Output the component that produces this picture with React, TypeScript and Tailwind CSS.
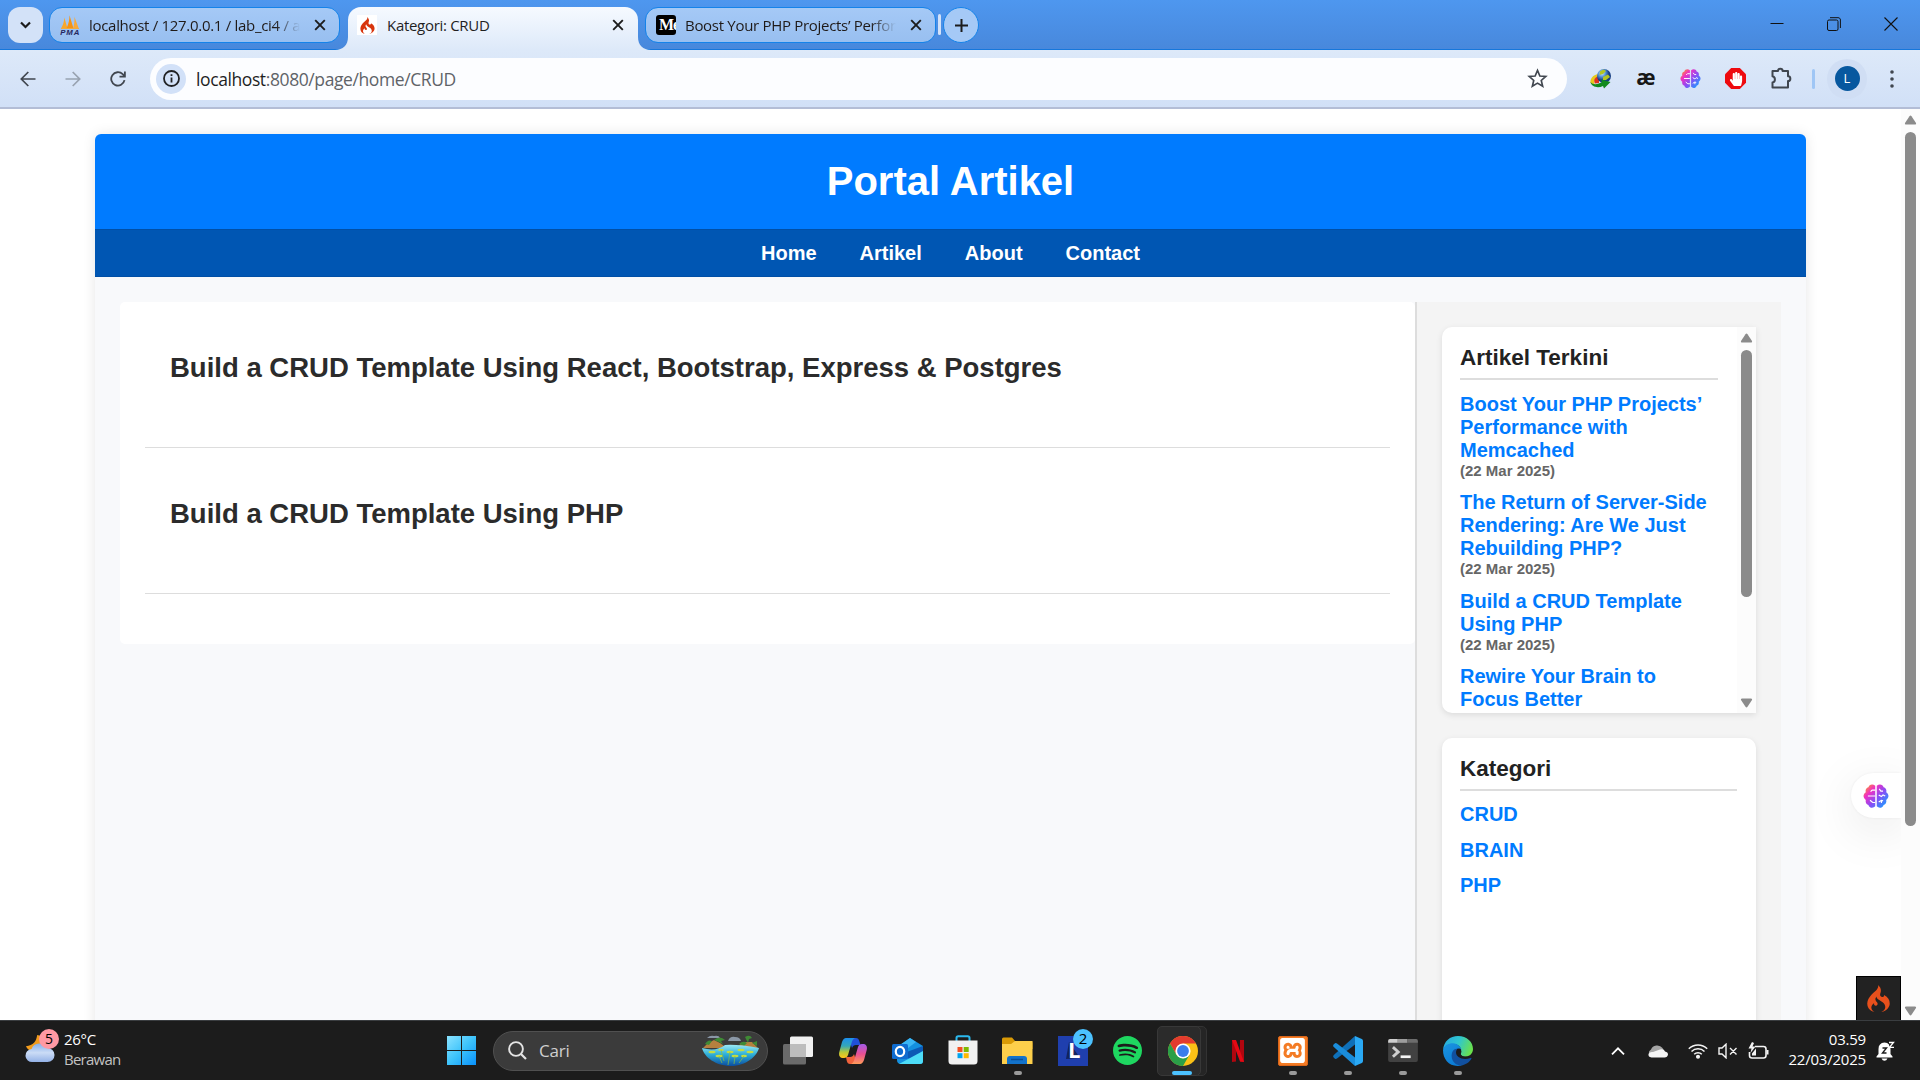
import React from "react";
import { SiCodeigniter, SiSpotify, SiXampp } from "react-icons/si";
import { FaHandPaper } from "react-icons/fa";

const articles = [
  "Build a CRUD Template Using React, Bootstrap, Express & Postgres",
  "Build a CRUD Template Using PHP",
];
const latest = [
  "Boost Your PHP Projects’ Performance with Memcached",
  "The Return of Server-Side Rendering: Are We Just Rebuilding PHP?",
  "Build a CRUD Template Using PHP",
  "Rewire Your Brain to Focus Better",
];
const categories = ["CRUD", "BRAIN", "PHP"];

function CloseX() {
  return (
    <svg width="12" height="12" viewBox="0 0 12 12" className="shrink-0">
      <path d="M1.200 1.200 10.800 10.800M10.800 1.200 1.200 10.800" stroke="#1c1c1c" strokeWidth="1.900" fill="none" />
    </svg>
  );
}

function PmaLogo() {
  return (
    <svg width="20" height="20" viewBox="0 0 20 20" className="shrink-0">
      <path d="M1 13.500C3 10 4 7 4.300 2.500L7.500 13.500Z" fill="#f9a72b" />
      <path d="M6.500 13.500C9 8 9.500 4 9.500 0.300L13.500 13.500Z" fill="#f59314" />
      <path d="M13 13.500C14.500 9 14.500 6 14.400 1.800L18.800 13.500Z" fill="#f8a93a" />
      <path d="M1 13.500H19" stroke="#f9a72b" strokeWidth="0.800" />
      <text x="0.300" y="19.800" fontFamily="Liberation Sans, sans-serif" fontSize="7.800" fontWeight="700" fontStyle="italic" fill="#25265e" textLength="19">PMA</text>
    </svg>
  );
}

function Brain({ size, id }: { size: number; id: string }) {
  return (
    <svg width={size} height={size} viewBox="0 0 24 24">
      <defs>
        <linearGradient id={id} x1="0.050" y1="0.050" x2="0.950" y2="0.850">
          <stop offset="0" stopColor="#ffa01e" />
          <stop offset="0.280" stopColor="#f02fc2" />
          <stop offset="0.600" stopColor="#8a4df5" />
          <stop offset="1" stopColor="#1e9bff" />
        </linearGradient>
      </defs>
      <path
        d="M11.300 2.500C9 .5 5.500 1.200 5 4 2.600 4.600 2 6.800 2.600 8.500-.2 10.400-.2 13.800 2.600 15.600 2 18 3.200 19.700 5 20.200 5.700 23 9.300 23.700 11.300 21.500ZM12.700 2.500C15 .5 18.500 1.200 19 4 21.400 4.600 22 6.800 21.400 8.500 24.200 10.400 24.200 13.800 21.400 15.600 22 18 20.800 19.700 19 20.200 18.300 23 14.700 23.700 12.700 21.500Z"
        fill={`url(#${id})`}
      />
      <path d="M11.300 6.500H8.500L7 8M11.300 12H4.500M11.300 18H9L6.500 16M15 5.500 16.500 7.500H18.500M14.500 11 17 12.500 18.500 11 20.500 12M14.500 17.500 17 16 18.500 16.500M17 16V18.500" stroke="#fff" strokeWidth="1.100" fill="none" />
    </svg>
  );
}

function BackgroundTab({ icon, title }: { icon: React.ReactNode; title: string }) {
  return (
    <div className="flex h-[36px] w-[291px] items-center rounded-[13px] border border-[#1483ea] bg-gradient-to-b from-[#a5c9f6] to-[#98bff0] pl-[10px] pr-[13px]">
      {icon}
      <div className="ml-[9px] h-[22px] w-[211px] overflow-hidden whitespace-nowrap bg-gradient-to-r from-[#1f1a18] from-88% to-transparent bg-clip-text text-[15px] leading-[22px] tracking-[-0.300px] text-transparent">
        {title}
      </div>
      <div className="flex-1" />
      <CloseX />
    </div>
  );
}

function TabStrip() {
  return (
    <div className="flex h-[50px] items-start border-b border-[#1677dc] bg-gradient-to-b from-[#4e97ef] to-[#4888dc] pl-[8px] pt-[7px]">
      <div className="flex h-[36px] w-[35px] items-center justify-center rounded-[12px] bg-[#d3e2f8]">
        <svg width="11" height="8" viewBox="0 0 11 8"><path d="M1 1.500 5.500 6 10 1.500" stroke="#1c1c1c" strokeWidth="2.200" fill="none" /></svg>
      </div>
      <div className="ml-[6px]">
        <BackgroundTab icon={<PmaLogo />} title="localhost / 127.0.0.1 / lab_ci4 / artikel" />
      </div>
      <div className="relative ml-[8px] h-[43px] w-[290px] rounded-t-[13px] bg-gradient-to-b from-[#f6faff] to-[#dde9f9]">
        <svg width="13" height="13" viewBox="0 0 13 13" className="absolute -left-[13px] bottom-0"><path d="M13 0V13H0C8 13 13 8 13 0" fill="#dfeaf9" /></svg>
        <svg width="13" height="13" viewBox="0 0 13 13" className="absolute -right-[13px] bottom-0"><path d="M0 0V13H13C5 13 0 8 0 0" fill="#dfeaf9" /></svg>
        <div className="flex h-[36px] items-center pl-[9px] pr-[14px]">
          <div className="flex h-5 w-5 items-center justify-center bg-white"><SiCodeigniter size={17} color="#d8340c" /></div>
          <div className="ml-[10px] text-[15px] leading-[22px] tracking-[-0.300px] text-[#1f1f1f]">Kategori: CRUD</div>
          <div className="flex-1" />
          <CloseX />
        </div>
      </div>
      <div className="ml-[7px]">
        <BackgroundTab
          icon={
            <svg width="20" height="20" viewBox="0 0 20 20" className="shrink-0">
              <rect width="20" height="20" rx="3" />
              <text x="3" y="15" fontFamily="Liberation Serif, serif" fontSize="16" fontWeight="700" letterSpacing="-1" fill="#fff">Me</text>
            </svg>
          }
          title="Boost Your PHP Projects’ Performance"
        />
      </div>
      <div className="ml-[2px] mt-[7px] h-[21px] w-[3px] rounded-full bg-[#d3e2f8]" />
      <div className="ml-[2px] flex h-[36px] w-[36px] items-center justify-center rounded-full border border-[#1483ea] bg-[#a5c9f6]">
        <svg width="13" height="13" viewBox="0 0 13 13"><path d="M6.500 0V13M0 6.500H13" stroke="#1c1c1c" strokeWidth="2" /></svg>
      </div>
      <div className="flex-1" />
      <div className="mt-[10px] flex items-center gap-[43px] pr-[22px]">
        <svg width="14" height="14" viewBox="0 0 14 14"><path d="M0.500 6.500H13.500" stroke="#111" /></svg>
        <svg width="14" height="14" viewBox="0 0 14 14" fill="none" stroke="#111"><rect x="0.500" y="3" width="10.500" height="10.500" rx="1.500" /><path d="M3 0.700H11C12.500 .7 13.400 1.500 13.400 3V11" /></svg>
        <svg width="14" height="14" viewBox="0 0 14 14"><path d="M0.500 0.500 13.500 13.500M13.500 0.500 0.500 13.500" stroke="#111" strokeWidth="1.100" /></svg>
      </div>
    </div>
  );
}

function Toolbar() {
  return (
    <div className="flex h-[59px] items-center border-b-2 border-[#b3bdd6] bg-gradient-to-b from-[#dde9f9] to-[#d1e0f7]">
      <div className="flex w-[150px] items-center gap-[29px] pl-[20px]">
        <svg width="16" height="16" viewBox="0 0 16 16" fill="none" stroke="#40464f" strokeWidth="1.700"><path d="M15.500 8H1.500M8.300 1 1.300 8 8.300 15" /></svg>
        <svg width="16" height="16" viewBox="0 0 16 16" fill="none" stroke="#98a2b0" strokeWidth="1.700"><path d="M.5 8H14.500M7.700 1 14.700 8 7.700 15" /></svg>
        <svg width="16" height="16" viewBox="0 0 16 16" fill="none" stroke="#40464f" strokeWidth="1.800"><path d="M14.500 9.200A6.700 6.700 0 1 1 12.700 3.200L14.800 5.300M14.900 0.500V5.700H9.500" /></svg>
      </div>
      <div className="flex h-[42px] w-[1417px] items-center rounded-full bg-[#fcfdff] pl-[6px] pr-[19px]">
        <div className="flex h-[30px] w-[30px] items-center justify-center rounded-full bg-[#d2e1f8]">
          <svg width="17" height="17" viewBox="0 0 17 17" fill="none" stroke="#202124" strokeWidth="1.800"><circle cx="8.500" cy="8.500" r="7.500" /><path d="M8.500 7.500V12.500M8.500 4.300V6.100" /></svg>
        </div>
        <div className="ml-[10px] whitespace-nowrap text-[17.500px] leading-[24px] tracking-[-0.400px] text-[#5f6368]"><span className="text-[#1f1f1f]">localhost</span>:8080/page/home/CRUD</div>
        <div className="flex-1" />
        <svg width="21" height="21" viewBox="0 0 24 24" fill="none" stroke="#40464f" strokeWidth="1.900"><path d="M12 2.800 14.700 9.100 21.500 9.700 16.300 14.200 17.900 20.900 12 17.300 6.100 20.900 7.700 14.200 2.500 9.700 9.300 9.100Z" /></svg>
      </div>
      <div className="ml-[11px] flex items-center">
        <div className="flex w-[45px] justify-center">
          <svg width="22" height="22" viewBox="0 0 22 22">
            <defs><radialGradient id="globe" cx="0.350" cy="0.300"><stop offset="0" stopColor="#d5ecff" /><stop offset="0.500" stopColor="#5a97d8" /><stop offset="1" stopColor="#163d82" /></radialGradient></defs>
            <path d="M8 6C3 7 0 10.500 .5 15L5 17C3 13 5 9 10 8Z" fill="#e8c81c" />
            <path d="M9 8C5 9 3 12 5 15.500L9 15Z" fill="#e0341e" />
            <circle cx="14" cy="8" r="7" fill="url(#globe)" />
            <path d="M10 3.500 13.500 1.500 16 3 13 6 9.500 7ZM13 9 18 6.500 20 9 16 12 13 12Z" fill="#b4c41f" />
            <path d="M.5 14C4 18 9 15.500 12 14L11 11.500 20.500 14 14 20.500 13 18C8 20.500 1.500 19 .5 14Z" fill="#128a1e" />
          </svg>
        </div>
        <div className="flex w-[45px] justify-center font-['Open_Sans',sans-serif] text-[21px] font-bold leading-[24px] tracking-[-1px] text-[#171717]"><span className="-mt-[3px]">æ</span></div>
        <div className="flex w-[45px] justify-center"><Brain size={21} id="brainToolbar" /></div>
        <div className="flex w-[45px] justify-center">
          <div className="relative flex h-[21px] w-[21px] items-center justify-center">
            <svg width="21" height="21" viewBox="0 0 21 21" className="absolute inset-0"><path d="M6.200 0H14.800L21 6.200V14.800L14.800 21H6.200L0 14.800V6.200Z" fill="#ee0a0f" /></svg>
            <FaHandPaper size={14} color="#fff" className="relative" />
          </div>
        </div>
        <div className="flex w-[45px] justify-center pl-[2px]">
          <svg width="23" height="23" viewBox="0 0 23 23" fill="none" stroke="#40464f" strokeWidth="2"><path d="M2.500 4H8A2.300 2.300 0 0 1 12.600 4H18V9.300A2.300 2.300 0 0 1 18 14V20.500H2.500V15.500A3.200 3.200 0 0 0 2.500 9.300Z" strokeLinejoin="round" /></svg>
        </div>
        <div className="ml-[9px] h-[20px] w-[3px] rounded bg-[#9fc6f5]" />
        <div className="ml-[12px] flex h-[40px] w-[40px] items-center justify-center rounded-full bg-[#d0def4]">
          <div className="flex h-[25px] w-[25px] items-center justify-center rounded-full bg-[#07589f] text-[13px] text-white">L</div>
        </div>
        <svg width="4" height="18" viewBox="0 0 4 18" className="ml-[23px]" fill="#40464f"><circle cx="2" cy="2" r="1.800" /><circle cx="2" cy="9" r="1.800" /><circle cx="2" cy="16" r="1.800" /></svg>
      </div>
    </div>
  );
}

function Arrow({ down }: { down?: boolean }) {
  return (
    <svg width="13" height="10" viewBox="0 0 13 10" className={down ? "rotate-180" : ""}>
      <path d="M5.500 1.200Q6.500 0 7.500 1.200L12 8Q12.600 9.500 11 9.500H2Q.4 9.500 1 8Z" fill="#8b8b8b" />
    </svg>
  );
}

function WidgetTitle({ children }: { children: React.ReactNode }) {
  return (
    <h3 className="mb-[12.500px] h-[35px] border-b-2 border-[#ddd] text-[22.500px] font-bold leading-[26px] text-[#222]">{children}</h3>
  );
}

function Page() {
  return (
    <div className="relative flex h-[911px] overflow-hidden bg-white font-['Liberation_Sans',Arial,sans-serif]">
      <div className="w-[1901px] pl-[95px] pt-[25px]">
        <div className="h-[1200px] w-[1711px] overflow-hidden rounded-[6px] bg-[#f8f9fb] shadow-[0_0_13px_rgba(0,0,0,0.1)]">
          <header className="flex h-[95px] items-start justify-center bg-[#007bff] pt-[24px]">
            <h1 className="text-[40px] font-bold leading-[46px] text-white">Portal Artikel</h1>
          </header>
          <nav className="flex h-[48px] items-center justify-center gap-[43px] border-y border-[#004fa6] bg-[#0056b3] text-[20px] font-bold leading-[23px] text-white">
            <a>Home</a>
            <a>Artikel</a>
            <a>About</a>
            <a>Contact</a>
          </nav>
          <div className="flex items-start px-[25px] pt-[25px]">
            <main className="h-[342px] w-[1295px] rounded-[5px] bg-white p-[25px]">
              {articles.map((title) => (
                <article key={title} className="mb-[25px] h-[121px] border-b border-[#ddd] p-[25px]">
                  <h2 className="text-[27.500px] font-bold leading-[32px] text-[#2b2b2b]">{title}</h2>
                </article>
              ))}
            </main>
            <aside className="h-[1100px] w-[366px] border-l-2 border-[#ddd] bg-[#f4f4f4] p-[25px]">
              <section className="mb-[25px] flex h-[386px] w-[314px] overflow-hidden rounded-l-[10px] bg-white shadow-[0_2px_6px_rgba(0,0,0,0.1)]">
                <div className="w-[295px] pl-[18px] pr-[19px] pt-[18px]">
                  <WidgetTitle>Artikel Terkini</WidgetTitle>
                  <ul>
                    {latest.map((title) => (
                      <li key={title} className="mb-[12.500px] text-[20px] font-bold leading-[23px] text-[#007bff]">
                        {title}
                        <small className="block text-[15px] leading-[17px] text-[#666]">(22 Mar 2025)</small>
                      </li>
                    ))}
                  </ul>
                </div>
                <div className="flex w-[19px] flex-col items-center bg-[#fcfcfc] pb-[5px] pt-[6px]">
                  <Arrow />
                  <div className="mt-[7px] h-[247px] w-[11px] rounded-full bg-[#8b8b8b]" />
                  <div className="flex-1" />
                  <Arrow down />
                </div>
              </section>
              <section className="h-[420px] w-[314px] rounded-[10px] bg-white pl-[18px] pr-[19px] pt-[18px] shadow-[0_2px_6px_rgba(0,0,0,0.1)]">
                <WidgetTitle>Kategori</WidgetTitle>
                <ul className="-mt-[0.500px]">
                  {categories.map((name) => (
                    <li key={name} className="mb-[12.500px] text-[20px] font-bold leading-[23px] text-[#007bff]">{name}</li>
                  ))}
                </ul>
              </section>
            </aside>
          </div>
        </div>
      </div>
      <div className="relative flex w-[19px] flex-col items-center bg-[#fcfcfc] pb-[4px] pt-[6px]">
        <Arrow />
        <div className="mt-[7px] h-[694px] w-[11px] rounded-full bg-[#8b8b8b]" />
        <div className="flex-1" />
        <Arrow down />
      </div>
      <div className="absolute bottom-0 right-[19px] top-0 w-[130px] overflow-hidden">
        <div className="absolute right-0 top-[664px] flex h-[45px] w-[50px] items-center rounded-l-full bg-white pl-[12px] shadow-[0_12px_50px_rgba(0,0,0,0.100),0_0_3px_rgba(0,0,0,0.060)]">
          <Brain size={26} id="brainFloating" />
        </div>
        <div className="absolute bottom-0 right-0 flex h-[44px] w-[45px] items-center justify-center border border-b-0 border-black bg-[#222]">
          <SiCodeigniter size={27} color="#e8501c" />
        </div>
      </div>
    </div>
  );
}

function Slot({ children, running }: { children: React.ReactNode; running?: boolean }) {
  return (
    <div className="relative flex h-[60px] w-[55px] items-center justify-center">
      {children}
      {running && <div className="absolute bottom-[6px] left-[23.500px] h-[4px] w-[8px] rounded-full bg-[#9a9a9a]" />}
    </div>
  );
}

function WindowsLogo() {
  return (
    <svg width="29" height="29" viewBox="0 0 29 29">
      <defs><linearGradient id="win" x1="0" y1="0" x2="29" y2="29" gradientUnits="userSpaceOnUse"><stop offset="0" stopColor="#8be3ff" /><stop offset="0.500" stopColor="#3dc3fb" /><stop offset="1" stopColor="#0890fa" /></linearGradient></defs>
      <path d="M0 0H14V14H0ZM15 0H29V14H15ZM0 15H14V29H0ZM15 15H29V29H15Z" fill="url(#win)" />
    </svg>
  );
}

function Lake() {
  return (
    <svg width="57" height="31" viewBox="0 0 57 31">
      <defs><linearGradient id="lake" x1="0" y1="0" x2="0" y2="1"><stop offset="0" stopColor="#9be8f4" /><stop offset="0.450" stopColor="#2fb0d8" /><stop offset="1" stopColor="#0a4da0" /></linearGradient></defs>
      <path d="M5 3Q8 0 12 1 17 0 18 3ZM26 6Q28 1 33 2 38 2 39 6Z" fill="#8a97a6" />
      <path d="M1 13 6 8 12 5 18 8 22 11 36 11 42 7 50 7 56 13Z" fill="#b5803f" />
      <path d="M3 9Q6 4 10 6L7 10ZM12 5Q18 0 23 5L19 6 21 9 17 7ZM37 9Q41 5 45 8L42 11ZM43 2Q48-1 50 3L47 4 46 8ZM50 8 55 6 55 11Z" fill="#3f8a35" />
      <path d="M0 13Q14 17 23 10 35 9 57 13C55 21 44 31 29 31 14 31 2 22 0 13Z" fill="url(#lake)" />
      <g fill="#c4dc45"><ellipse cx="10" cy="17" rx="3.500" ry="1.300" /><ellipse cx="19" cy="15" rx="3" ry="1.100" /><ellipse cx="28" cy="17" rx="3.500" ry="1.200" /><ellipse cx="39" cy="15" rx="3.500" ry="1.200" /><ellipse cx="48" cy="17" rx="3.500" ry="1.200" /><ellipse cx="17" cy="21" rx="3.500" ry="1.300" /><ellipse cx="33" cy="21" rx="3.500" ry="1.300" /><ellipse cx="42" cy="21" rx="3" ry="1.200" /></g>
      <path d="M17 21 20 28M28 17 26 30M33 21 32 29M42 21 37 28M19 15 22 26" stroke="#8fbf3c" strokeWidth="0.700" fill="none" />
    </svg>
  );
}

function TaskViewIcon() {
  return (
    <svg width="30" height="29" viewBox="0 0 30 29">
      <rect x="7" y="0.500" width="23" height="20.500" rx="1.500" fill="#f1f1f1" />
      <rect x="0" y="8" width="23" height="20.500" rx="1.500" fill="#6a6a6a" />
      <rect x="7" y="8" width="16" height="13" fill="#bdbdbd" />
    </svg>
  );
}

function CopilotIcon() {
  return (
    <svg width="28" height="26" viewBox="0 0 28 26">
      <defs>
        <linearGradient id="copL" x1="0" y1="0" x2="0" y2="1"><stop offset="0" stopColor="#1c8fee" /><stop offset="0.400" stopColor="#35a7b8" /><stop offset="0.700" stopColor="#b4c93a" /><stop offset="1" stopColor="#ffc41a" /></linearGradient>
        <linearGradient id="copR" x1="0" y1="0" x2="0" y2="1"><stop offset="0" stopColor="#a45ae8" /><stop offset="0.500" stopColor="#e84f92" /><stop offset="1" stopColor="#ff9b58" /></linearGradient>
      </defs>
      <path d="M13 0H17Q19.500 0 20.300 3L21.500 7H17Q14 7 13 10L10 1Z" fill="#2150d8" />
      <path d="M15 26H11Q8.500 26 7.800 23L7 19H11Q14 19 15 16L18 25Z" fill="#f0623c" />
      <path d="M7 0H16Q13.500 1 12.500 5L9 17Q8 20 5 20H3Q-.8 19 .3 14L3 4Q4.500 0 7 0Z" fill="url(#copL)" />
      <path d="M21 26H12Q14.500 25 15.500 21L19 9Q20 6 23 6H25Q28.800 7 27.700 12L25 22Q23.500 26 21 26Z" fill="url(#copR)" />
    </svg>
  );
}

function OutlookIcon() {
  return (
    <svg width="31" height="28" viewBox="0 0 31 28">
      <path d="M5 10 18 1 31 9V24Q31 27 28 27H9Q5 27 5 23Z" fill="#1490df" />
      <path d="M5 10 18 1 24 5 12 14Z" fill="#3ab6f5" />
      <path d="M31 9V15L17 22 12 16Z" fill="#0c59b5" />
      <path d="M31 14V24Q31 27 28 27H7Z" fill="#4ddcf7" />
      <rect x="0" y="7" width="16" height="15" rx="1.500" fill="#0f6cd0" />
      <ellipse cx="8" cy="14.500" rx="4.200" ry="4.700" fill="none" stroke="#fff" strokeWidth="2.200" />
    </svg>
  );
}

function StoreIcon() {
  return (
    <svg width="30" height="30" viewBox="0 0 30 30">
      <path d="M8.500 7V3Q8.500 1.200 10.300 1.200H19.700Q21.500 1.200 21.500 3V7" fill="none" stroke="#2bb9ee" strokeWidth="2" />
      <path d="M.5 5.500H29.500V26Q29.500 29.500 26 29.500H4Q.5 29.500 .5 26Z" fill="#f1f1f1" />
      <path d="M9.500 12H14.500V17H9.500Z" fill="#f25022" /><path d="M15.700 12H20.700V17H15.700Z" fill="#7fba00" /><path d="M9.500 18.200H14.500V23.200H9.500Z" fill="#00a4ef" /><path d="M15.700 18.200H20.700V23.200H15.700Z" fill="#ffb900" />
    </svg>
  );
}

function ExplorerIcon() {
  return (
    <svg width="31" height="28" viewBox="0 0 31 28">
      <path d="M0 2Q0 .5 1.500 .5H10L13 4H29Q30.500 4 30.500 6V12H0Z" fill="#d99a06" />
      <path d="M0 7H9L13 4H30.500V27H0Z" fill="#fdcf4b" />
      <path d="M5 27V22Q5 19 8 19H22Q25 19 25 22V27Z" fill="#1373cb" />
      <path d="M9 22.500H21" stroke="#0a4f96" strokeWidth="1.500" />
    </svg>
  );
}

function ChromeIcon() {
  return (
    <svg width="30" height="30" viewBox="0 0 30 30">
      <circle cx="15" cy="15" r="15" fill="#fbc116" />
      <path d="M2 7.500A15 15 0 0 1 28 7.500H15L8.500 18.700Z" fill="#e33b2e" />
      <path d="M2 7.500A15 15 0 0 0 15 30L21.500 18.700 15 22.500 8.500 18.700Z" fill="#2b9f48" />
      <circle cx="15" cy="15" r="7.600" fill="#fff" />
      <circle cx="15" cy="15" r="5.900" fill="#3b7ded" />
    </svg>
  );
}

function NetflixIcon() {
  return (
    <svg width="12" height="22" viewBox="0 0 12 22">
      <path d="M0 0H4V21.500L0 22ZM8 0H12V22L8 21.500Z" fill="#b1060f" />
      <path d="M0 0H4L12 22 8 21.500Z" fill="#e50914" />
    </svg>
  );
}

function VsCodeIcon() {
  return (
    <svg width="30" height="30" viewBox="0 0 30 30">
      <path d="M22 8.500V0L.8 19Q-.4 20.200 .6 21.400L2 22.700Q3 23.300 4 22.600Z" fill="#0f70b8" />
      <path d="M22 21.500V30L.8 11Q-.4 9.800 .6 8.600L2 7.300Q3 6.700 4 7.400Z" fill="#1a8ddb" />
      <path d="M22 0 28.800 3Q30 3.600 30 5V25Q30 26.400 28.800 27L22 30Z" fill="#2aa9f4" />
    </svg>
  );
}

function TerminalIcon() {
  return (
    <svg width="30" height="23" viewBox="0 0 31 24">
      <rect width="31" height="24" rx="2" fill="#424242" />
      <path d="M2 0H10V4H0V2Q0 0 2 0Z" fill="#cfcfcf" /><path d="M10 0H20V4H10Z" fill="#9d9d9d" /><path d="M20 0H29Q31 0 31 2V4H20Z" fill="#6d6d6d" />
      <path d="M5 8.500 10.500 13.500 5 18.500" stroke="#cfcfcf" strokeWidth="3" fill="none" /><path d="M13 18.500H23.500" stroke="#f5f5f5" strokeWidth="2.800" />
    </svg>
  );
}

function EdgeIcon() {
  return (
    <svg width="30" height="30" viewBox="0 0 30 30">
      <defs>
        <linearGradient id="edgeA" x1="0" y1="0.200" x2="1" y2="0.500"><stop offset="0" stopColor="#27a9e0" /><stop offset="0.500" stopColor="#2fc6cf" /><stop offset="1" stopColor="#6ae14c" /></linearGradient>
        <linearGradient id="edgeB" x1="0" y1="0" x2="0.600" y2="1"><stop offset="0" stopColor="#1b95e0" /><stop offset="1" stopColor="#0b7bd6" /></linearGradient>
      </defs>
      <path d="M0 14C1 5 7 0 15 0 24 0 30 6 30 13 30 18 26 20.500 22.500 20.500 18.500 20.500 17 18.500 18.200 16.500 19 11 15 8 10 8 5 8 1 11 0 14Z" fill="url(#edgeA)" />
      <path d="M0 14C1 9 6 7 10 7.200 15 7.700 18 11 18.500 14 16 11 12 13 11 17 10 23 14 29 19 29.400 7 32 0 24 0 14Z" fill="url(#edgeB)" />
      <path d="M11.300 13.500C6.500 17 8 29 18 29.500 23 29 27 25.500 28.500 22.500 28.500 21.500 28 21.600 27.500 21.900 20 25 13 21 13 16.500 13 14.500 14 13.500 14.500 12.800 13.500 12.500 12.200 12.900 11.300 13.500Z" fill="#11509f" />
      <path d="M14 16.500C14 13.500 18 13 18.300 15.500 18.300 17 17.200 17.500 17.800 18.800 18.500 20.500 22 21.200 25.500 20.300 20 23.500 14 20.500 14 16.500Z" fill="#1c1c1c" />
    </svg>
  );
}

function Taskbar() {
  return (
    <div className="flex h-[60px] items-center border-t border-[#3a3d40] bg-[#1c1c1c]">
      <div className="relative flex w-[434px] items-center pl-[25px]">
        <svg width="30" height="30" viewBox="0 0 30 32" className="-mt-[5px]">
          <defs><linearGradient id="cloud" x1="0" y1="0" x2="0" y2="1"><stop offset="0" stopColor="#85aeea" /><stop offset="0.500" stopColor="#cbdcf6" /><stop offset="1" stopColor="#93b1e6" /></linearGradient></defs>
          <path d="M12 2C11 9 8 13 0 14 2 19 7 20 12 18L20 12V4Z" fill="#f29c1c" />
          <path d="M7 31A7 7 0 0 1 6 17 9 8 0 0 1 23 16 7.500 7.500 0 0 1 23 31Z" fill="url(#cloud)" />
        </svg>
        <div className="absolute left-[39px] top-[-4px] flex h-5 w-5 items-center justify-center rounded-full bg-[#ff99a4] text-[14px] leading-none text-black">5</div>
        <div className="-mt-[4px] ml-[9px] text-[15px] leading-[20px] tracking-[-0.750px]">
          <div className="tracking-[-0.300px] text-white">26°C</div>
          <div className="text-[#c2c2c2]">Berawan</div>
        </div>
      </div>
      <Slot><WindowsLogo /></Slot>
      <div className="mx-[4px] flex h-[40px] w-[275px] items-center rounded-full border border-[#505050] bg-[#3b3b3b] pl-[14px] pr-[8px]">
        <svg width="19" height="19" viewBox="0 0 19 19" fill="none" stroke="#e4e4e4"><circle cx="8" cy="8" r="6.900" strokeWidth="1.900" /><path d="M13 13 18 18" strokeWidth="2.200" /></svg>
        <div className="ml-[12px] text-[17px] leading-[24px] tracking-[-0.200px] text-[#cfcfcf]">Cari</div>
        <div className="flex-1" />
        <Lake />
      </div>
      <div className="-ml-[2px] flex">
        <Slot><TaskViewIcon /></Slot>
        <Slot><CopilotIcon /></Slot>
        <Slot><OutlookIcon /></Slot>
        <Slot><div className="-mt-[2px]"><StoreIcon /></div></Slot>
        <Slot running><ExplorerIcon /></Slot>
        <Slot>
          <svg width="30" height="30" viewBox="0 0 30 30">
            <rect width="30" height="30" fill="#1f3fae" />
            <path d="M11 6 8 23 22 22Z" fill="#12245e" />
            <text x="10" y="22" fontFamily="Open Sans, sans-serif" fontSize="22" fontWeight="700" fill="#fff">L</text>
          </svg>
          <div className="absolute left-[28px] top-[8px] flex h-5 w-5 items-center justify-center rounded-full bg-[#4cc2ff] text-[15px] leading-none text-black">2</div>
        </Slot>
        <Slot><SiSpotify size={29} color="#1ed760" /></Slot>
        <Slot>
          <div className="absolute left-[7px] top-[5px] h-[50px] w-[45px] rounded-[5px] border border-[#333] bg-[#252525]" />
          <div className="absolute left-[2px] top-[5px] h-[50px] w-[44px] rounded-[5px] border border-[#383838] bg-[#2b2b2b]" />
          <div className="relative"><ChromeIcon /></div>
          <div className="absolute bottom-[6px] left-[17px] h-[4px] w-[20px] rounded-full bg-[#4cc2ff]" />
        </Slot>
        <Slot><NetflixIcon /></Slot>
        <Slot running><div className="flex h-[30px] w-[30px] items-center justify-center rounded-[2px] border border-[#d9651a] bg-[#f47b24]"><SiXampp size={25} color="#fff" /></div></Slot>
        <Slot running><VsCodeIcon /></Slot>
        <Slot running><TerminalIcon /></Slot>
        <Slot running><EdgeIcon /></Slot>
      </div>
      <div className="flex-1" />
      <div className="flex items-center pr-[25px]">
        <svg width="14" height="8" viewBox="0 0 14 8" className="mr-[23px]"><path d="M1 7.300 7 1.300 13 7.300" stroke="#fff" strokeWidth="1.800" fill="none" /></svg>
        <svg width="20" height="14" viewBox="0 0 20 14" className="mr-[20px]"><path d="M4 13A4 4 0 0 1 3 5.500 6.500 6 0 0 1 14.500 4L17 9Z" fill="#a5a5a5" /><path d="M3.500 13.500Q0 13 .5 10 1.500 7.500 5 8L12 5.500Q16 4.500 17 7.500 20 8 20 10.500 19.500 13.500 16.500 13.500Z" fill="#f4f4f4" /></svg>
        <svg width="20" height="16" viewBox="0 0 20 16" className="mr-[10px]" fill="none" stroke="#f4f4f4" strokeWidth="1.500"><path d="M.8 5.800A13 13 0 0 1 19.200 5.800M3.500 8.500A9.200 9.200 0 0 1 16.500 8.500M6.200 11.200A5.400 5.400 0 0 1 13.800 11.200" /><circle cx="10" cy="13.700" r="1.300" fill="#f4f4f4" /></svg>
        <svg width="20" height="16" viewBox="0 0 20 16" className="mr-[10px]" fill="none" stroke="#f4f4f4" strokeWidth="1.400"><path d="M1 5H4L8 1.200V14.800L4 11H1ZM12 5 18.500 11.500M18.500 5 12 11.500" /></svg>
        <svg width="21" height="18" viewBox="0 0 21 18" className="mr-[14px]"><path d="M7 4.500H15.500Q18 4.500 18 7V13.500Q18 16 15.500 16H4Q1.500 16 1.500 13.500V10" fill="none" stroke="#f4f4f4" strokeWidth="1.600" /><path d="M18.500 8H20.500V12.500H18.500ZM4 13.500V11.500L8 6.500V13.500ZM4 0 .5 6.500H3.500L2.500 11 7.500 4.500H4.500L6 1Z" fill="#f4f4f4" /></svg>
        <div className="-mt-[3px] w-[83px] whitespace-nowrap text-right text-[15px] leading-[20px] tracking-[-0.200px] text-white">
          <div>03.59</div>
          <div>22/03/2025</div>
        </div>
        <div className="relative ml-[10px] h-[20px] w-[19px]">
          <svg width="19" height="20" viewBox="0 0 19 20"><path d="M2.500 13V8Q2.500 2 8.500 1.500 14.500 2 14.500 8V13L16.500 15.500V16.500H.5V15.500ZM5.500 17.500H11.500Q10.500 19.800 8.500 19.800 6.500 19.800 5.500 17.500Z" fill="#fff" /><path d="M6.500 7H10.500L6.500 12H10.500" stroke="#1c1c1c" strokeWidth="1.400" fill="none" /><path d="M12 0H19V7H14Z" fill="#1c1c1c" /><path d="M13 1.500H17.500L13.500 6.300H18" stroke="#fff" strokeWidth="1.300" fill="none" /></svg>
        </div>
      </div>
    </div>
  );
}

export default function App() {
  return (
    <div className="h-[1080px] w-[1920px] overflow-hidden font-['Open_Sans','Noto_Sans',sans-serif]">
      <TabStrip />
      <Toolbar />
      <Page />
      <Taskbar />
    </div>
  );
}
